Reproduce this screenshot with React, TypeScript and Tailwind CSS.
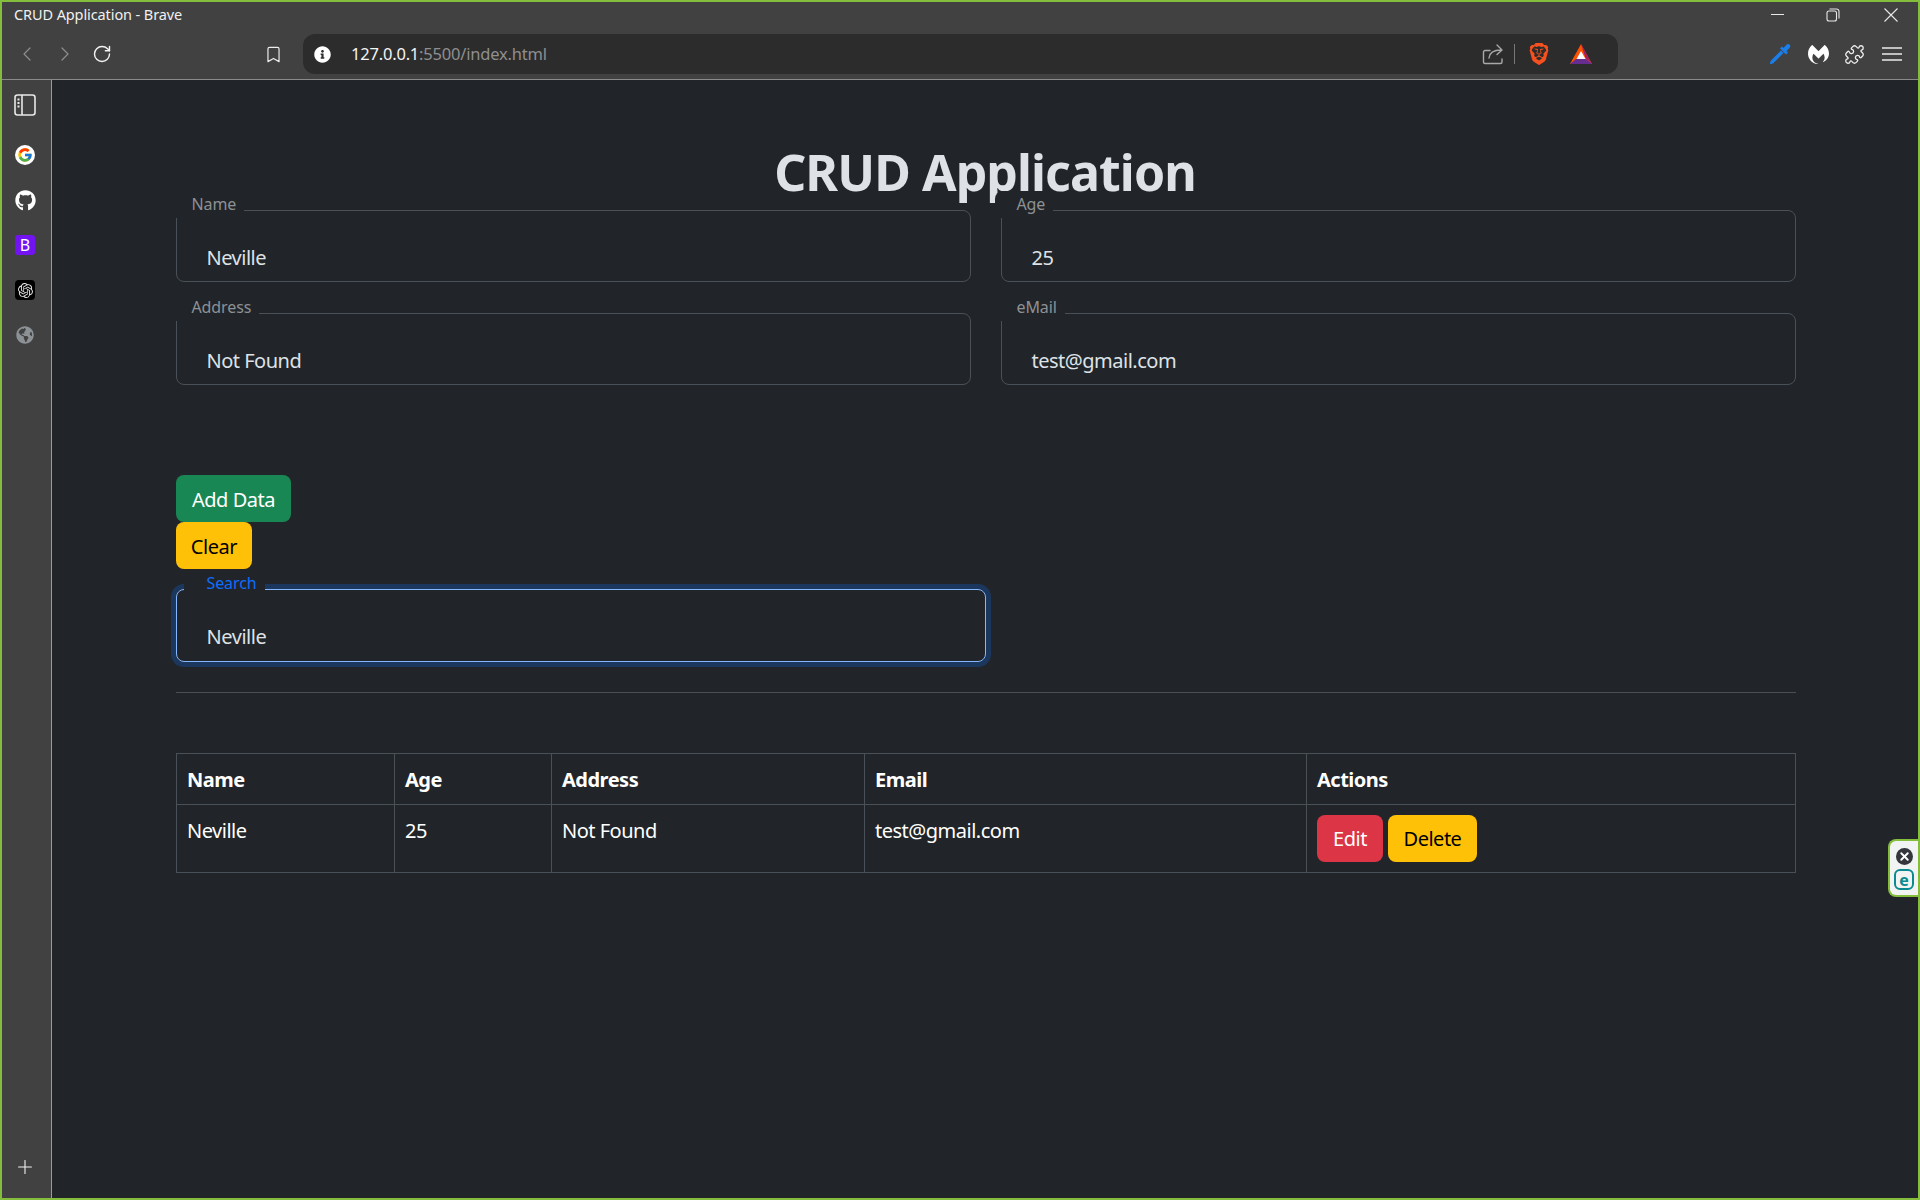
import React from "react";
import { ChevronLeft, ChevronRight, RotateCw, Bookmark, Puzzle, Plus, X } from "lucide-react";
import { FaInfoCircle, FaGithub, FaGlobeAmericas } from "react-icons/fa";
import { FcGoogle } from "react-icons/fc";
import { SiOpenai, SiBrave, SiMalwarebytes } from "react-icons/si";

const font = "[font-family:'Noto_Sans','Open_Sans',sans-serif]";

function Field({ label, value }: { label: string; value: string }) {
  return (
    <div className="relative h-[72px] rounded-[8px] border border-[#495057] pl-[29.5px] pt-[32px] text-[20px] leading-[30px] tracking-[-0.5px] text-[#dee2e6]">
      <div className="absolute left-[-7px] top-[-20px] flex h-[27px] items-start rounded-tl-[8px] bg-[#212529] pl-[21.5px] pr-[8px] pt-[1px] text-[16px] leading-[24px] tracking-[-0.1px] text-[#8d9195]">
        {label}
      </div>
      {value}
    </div>
  );
}

function Th({ w, children }: { w: string; children: React.ReactNode }) {
  return <th className={`${w} border border-[#495057] pb-[9px] pl-[10px] pr-[10px] pt-[11px] text-left align-top text-[20px] font-bold leading-[30px] tracking-[-0.5px] text-white`}>{children}</th>;
}

function Td({ children }: { children: React.ReactNode }) {
  return <td className="border border-[#495057] pb-[10px] pl-[10px] pr-[10px] pt-[11px] align-top text-[20px] leading-[30px] tracking-[-0.5px] text-white">{children}</td>;
}

function ShareIcon() {
  return (
    <svg width="22" height="22" viewBox="0 0 22 22" fill="none" stroke="#a8a8a8" strokeWidth="1.4" strokeLinecap="round" strokeLinejoin="round">
      <path d="M8 7.5H3a1.5 1.5 0 0 0-1.5 1.5v10A1.5 1.5 0 0 0 3 20.5h15.5A1.5 1.5 0 0 0 20 19v-3" />
      <path d="M7 15c.5-5 4-8 12-8M15 2l5 5-5 4.5" />
    </svg>
  );
}

function BatIcon() {
  return (
    <svg width="24" height="22" viewBox="0 0 24 22">
      <polygon points="12,1 1,21 23,21" fill="#ff5000" />
      <polygon points="12,1 23,21 16.5,15" fill="#9e1f63" />
      <polygon points="1,21 23,21 17,16 7,16" fill="#662d91" />
      <polygon points="12,8 7.5,16 16.5,16" fill="#ffffff" />
    </svg>
  );
}

function DropperIcon() {
  return (
    <svg width="22" height="22" viewBox="0 0 22 22">
      <path d="M1 21c0-1.500 .5-3 1.500-4L12 7.500l2.500 2.500L5 19.500C4 20.500 2.500 21 1 21z" fill="#1a7fe8" />
      <path d="M11 5.500l2-2 1.500 1.500 3-3.200c1-1 2.500-.8 3.200 0 .8.800 .8 2.200-.2 3.200l-3 3 1.500 1.500-2 2z" fill="#1a7fe8" />
    </svg>
  );
}

function PanelIcon() {
  return (
    <svg width="22" height="22" viewBox="0 0 22 22" fill="none" stroke="#e8e8e8" strokeWidth="1.6">
      <rect x="1" y="1" width="20" height="20" rx="2.500" />
      <path d="M8 1v20" />
      <path d="M3.500 5.500h2M3.500 9h2M3.500 12.500h2" strokeWidth="1.800" />
    </svg>
  );
}

export default function App() {
  return (
    <div className={`flex h-[1200px] w-[1920px] flex-col overflow-hidden border-2 border-[#85bd3c] bg-[#414141] ${font}`}>
      {/* Title bar */}
      <div className="flex h-[32px] shrink-0 items-start justify-between pl-[12px] text-white">
        <div className="pt-[2px] text-[14.5px] leading-[20px] tracking-[-0.1px] text-[#f0f0f0]">CRUD Application - Brave</div>
        <div className="flex h-[25px] items-center pr-[20px]">
          <div className="mr-[42px] h-px w-[13px] bg-[#e8e8e8]" />
          <svg width="14" height="14" viewBox="0 0 14 14" fill="none" stroke="#e8e8e8" strokeWidth="1.1" className="mr-[44px]">
            <rect x="1" y="3" width="9.500" height="10" rx="2" />
            <path d="M3.500 1h7A2.500 2.500 0 0 1 13 3.500v7" />
          </svg>
          <svg width="14" height="14" viewBox="0 0 14 14" fill="none" stroke="#e8e8e8" strokeWidth="1.1">
            <path d="M.5 .5l13 13M13.500 .5l-13 13" />
          </svg>
        </div>
      </div>

      {/* Toolbar */}
      <div className="flex h-[46px] shrink-0 items-start border-b border-[#8a8a8a] pl-[6px]">
        <div className="flex h-[40px] items-center">
          <div className="flex w-[38px] justify-center"><ChevronLeft size={24} strokeWidth={1.2} color="#8d8d8d" /></div>
          <div className="flex w-[37px] justify-center"><ChevronRight size={24} strokeWidth={1.2} color="#8d8d8d" /></div>
          <div className="flex w-[38px] justify-center"><RotateCw size={20} strokeWidth={1.700} color="#f2f2f2" /></div>
          <div className="ml-[133px] flex w-[38px] justify-center"><Bookmark size={19} strokeWidth={1.500} color="#ededed" /></div>
        </div>
        <div className="ml-[11px] flex h-[40px] w-[1315px] items-center rounded-[12px] bg-[#2c2c2c] pl-[11px]">
          <FaInfoCircle size={17} color="#ffffff" />
          <div className="ml-[20px] text-[16.5px] leading-[24px] tracking-[-0.2px] text-[#f4f4f4]">
            127.0.0.1<span className="text-[#8f8f8f]">:5500/index.html</span>
          </div>
          <div className="ml-auto flex items-center pr-[25px]">
            <ShareIcon />
            <div className="ml-[10px] h-[20px] w-px bg-[#777777]" />
            <SiBrave size={22} color="#f4511e" className="ml-[13px]" />
            <div className="ml-[19px]"><BatIcon /></div>
          </div>
        </div>
        <div className="flex h-[40px] items-center">
          <div className="ml-[151px]"><DropperIcon /></div>
          <SiMalwarebytes size={21} color="#ffffff" className="ml-[17px]" />
          <Puzzle size={21} strokeWidth={1.500} color="#eeeeee" className="ml-[15px]" />
          <svg width="20" height="16" viewBox="0 0 20 16" stroke="#eaeaea" strokeWidth="1.400" className="ml-[17px]">
            <path d="M0 2h20M0 8h20M0 14h20" />
          </svg>
        </div>
      </div>

      <div className="flex min-h-0 flex-1">
        {/* Sidebar */}
        <div className="flex w-[50px] shrink-0 flex-col items-center border-r border-[#9a9a9a] pr-[3px] pt-[14px]">
          <PanelIcon />
          <div className="mt-[29px] flex h-[20px] w-[20px] items-center justify-center rounded-full bg-white"><FcGoogle size={16} /></div>
          <div className="mt-[25px] rounded-full"><FaGithub size={21} color="#ffffff" /></div>
          <div className="mt-[24px] flex h-[20px] w-[20px] items-center justify-center rounded-[3px] bg-[#7214f2] text-[16px] leading-none text-white">B</div>
          <div className="mt-[25px] flex h-[20px] w-[20px] items-center justify-center rounded-[4px] bg-black"><SiOpenai size={15} color="#e5e5e5" /></div>
          <div className="mt-[26px]"><FaGlobeAmericas size={18} color="#8c9196" /></div>
          <div className="mb-[20px] mt-auto"><Plus size={22} strokeWidth={1.200} color="#f2f2f2" /></div>
        </div>

        {/* Page */}
        <div className="relative min-w-0 flex-1 bg-[#212529] pl-[124px] pr-[122px]">
          <h1 className="ml-[-124px] mr-[-122px] pt-[62px] text-center text-[50px] font-bold leading-[60px] tracking-[-0.9px] text-[#dee2e6]">CRUD Application</h1>
          <div className="mt-[8px] grid grid-cols-2 gap-x-[30px] gap-y-[31px]">
            <Field label="Name" value="Neville" />
            <Field label="Age" value="25" />
            <Field label="Address" value="Not Found" />
            <Field label="eMail" value="test@gmail.com" />
          </div>

          <div className="mt-[90px] flex flex-col items-start">
            <div className="flex h-[47px] w-[115px] items-center justify-center rounded-[8px] bg-[#198754] pt-[2px] text-[20px] tracking-[-0.45px] text-white">Add Data</div>
            <div className="flex h-[47px] w-[76px] items-center justify-center rounded-[8px] bg-[#ffc107] pt-[2px] text-[20px] tracking-[-0.45px] text-black">Clear</div>
          </div>

          <div className="relative mt-[20px] h-[73px] w-[810px] rounded-[8px] border border-[#86b7fe] pl-[29.5px] pt-[32px] text-[20px] leading-[30px] tracking-[-0.45px] text-[#dee2e6] shadow-[0_0_0_5px_rgba(13,110,253,0.25)]">
            <div className="absolute left-[7px] top-[-20px] h-[22px] bg-[#212529] pl-[22.5px] pr-[8px] pt-[2px] text-[16px] leading-[22px] tracking-[-0.1px] text-[#0d6efd]">Search</div>
            Neville
          </div>

          <div className="mt-[30px] h-px bg-[#4b4e52]" />

          <table className="mt-[60px] w-full table-fixed border-collapse">
            <thead>
              <tr>
                <Th w="w-[218px]">Name</Th>
                <Th w="w-[157px]">Age</Th>
                <Th w="w-[313px]">Address</Th>
                <Th w="w-[442px]">Email</Th>
                <Th w="w-auto">Actions</Th>
              </tr>
            </thead>
            <tbody>
              <tr>
                <Td>Neville</Td>
                <Td>25</Td>
                <Td>Not Found</Td>
                <Td>test@gmail.com</Td>
                <td className="border border-[#495057] px-[10px] py-[10px] align-top text-[20px] leading-[30px] tracking-[-0.5px]">
                  <div className="flex gap-[5px]">
                    <div className="flex h-[47px] w-[66px] items-center justify-center rounded-[8px] bg-[#dc3545] text-white">Edit</div>
                    <div className="flex h-[47px] w-[89px] items-center justify-center rounded-[8px] bg-[#ffc107] text-black">Delete</div>
                  </div>
                </td>
              </tr>
            </tbody>
          </table>

          {/* Extension floating tab */}
          <div className="absolute right-0 top-[759px] flex h-[58px] w-[30px] flex-col items-center gap-[4px] rounded-l-[8px] border-2 border-r-0 border-[#85bd3c] bg-[#f2f4f4] pt-[7px]">
            <div className="flex h-[17px] w-[17px] items-center justify-center rounded-full bg-[#33363b]"><X size={13} strokeWidth={3.500} color="#ffffff" /></div>
            <div className="flex h-[21px] w-[20px] items-center justify-center rounded-[6px] border-2 border-[#0b8a8f] text-[16px] font-bold leading-none text-[#0b8a8f]">e</div>
          </div>
        </div>
      </div>
    </div>
  );
}
